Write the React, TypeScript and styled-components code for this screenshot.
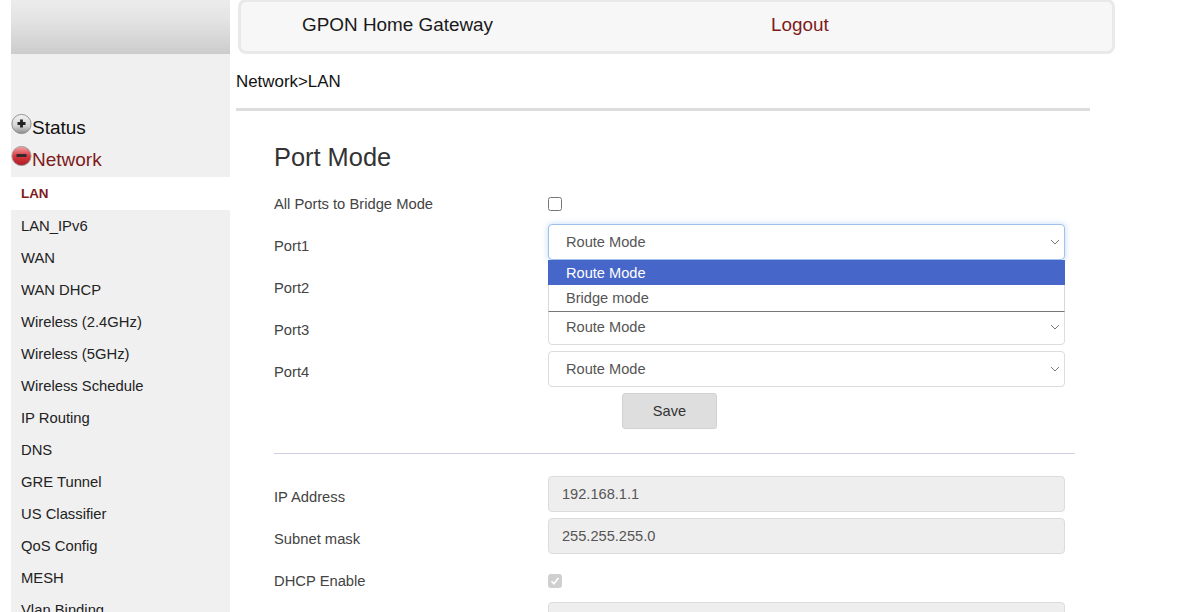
import React from "react";
import styled, { createGlobalStyle } from "styled-components";

const Global = createGlobalStyle`
  html, body { margin: 0; padding: 0; background: #fff; }
  body { font-family: "Liberation Sans", Arial, sans-serif; }
  * { box-sizing: border-box; }
`;

const Page = styled.div`
  width: 1200px;
  height: 612px;
  overflow: hidden;
  display: flex;
  padding-left: 11px;
`;

const Sidebar = styled.aside`
  width: 219px;
  flex: none;
  background: #f0f0f0;
`;

const Banner = styled.div`
  height: 54px;
  margin-bottom: 58px;
  background: linear-gradient(#ececec 0%, #e4e4e4 35%, #cccccc 100%);
`;

const Group = styled.div<{ $active?: boolean }>`
  height: 32px;
  display: flex;
  align-items: flex-start;
  font-size: 19px;
  color: ${(p) => (p.$active ? "#7e1b1b" : "#111")};
  svg { flex: none; margin: 1px 0 0 0; }
  span { margin-top: 5px; line-height: 22px; }
`;

const NavList = styled.nav`
  display: flex;
  flex-direction: column;
  margin-top: 1px;
`;

const NavItem = styled.div<{ $active?: boolean }>`
  height: ${(p) => (p.$active ? "33px" : "32px")};
  padding-left: 10px;
  display: flex;
  align-items: center;
  font-size: ${(p) => (p.$active ? "13.4px" : "14.8px")};
  font-weight: ${(p) => (p.$active ? 700 : 400)};
  color: ${(p) => (p.$active ? "#7e1b1b" : "#222")};
  background: ${(p) => (p.$active ? "#fff" : "transparent")};
`;

const Main = styled.main`
  flex: none;
  width: 880px;
  margin-left: 6px;
`;

const Header = styled.header`
  width: 877px;
  height: 55px;
  margin: -1px 0 0 2px;
  display: flex;
  align-items: center;
  background: #f7f7f7;
  border: 3px solid #e9e9e9;
  border-radius: 8px;
  padding: 0 0 3px 61px;
  font-size: 18.9px;
  color: #1a1a1a;
`;

const Title = styled.div`
  width: 469px;
  flex: none;
`;

const Logout = styled.div`
  color: #7e1b1b;
`;

const Crumb = styled.div`
  height: 54px;
  padding-top: 2px;
  display: flex;
  align-items: center;
  font-size: 16.9px;
  color: #111;
`;

const Rule = styled.div`
  width: 854px;
  height: 3px;
  background: #dddddd;
`;

const Content = styled.div`
  padding: 32px 0 0 38px;
`;

const Heading = styled.h2`
  margin: 0 0 20px;
  height: 29px;
  font-size: 25.4px;
  line-height: 29px;
  font-weight: 400;
  color: #333;
`;

const Row = styled.div<{ $h?: number }>`
  height: ${(p) => p.$h ?? 42}px;
  display: flex;
  align-items: flex-start;
`;

const Label = styled.label<{ $top?: number }>`
  width: 274px;
  flex: none;
  font-size: 14.75px;
  line-height: 18px;
  padding-top: ${(p) => p.$top ?? 12}px;
  color: #444;
`;

const Box = styled.div<{ $checked?: boolean }>`
  width: 14px;
  height: 14px;
  margin-top: ${(p) => (p.$checked ? 14 : 5)}px;
  border-radius: 2.5px;
  display: flex;
  align-items: center;
  justify-content: center;
  border: 1px solid ${(p) => (p.$checked ? "#cfcfcf" : "#767676")};
  background: ${(p) => (p.$checked ? "#cfcfcf" : "#fff")};
`;

const SelectWrap = styled.div`
  position: relative;
  width: 516.5px;
`;

const Select = styled.div<{ $focus?: boolean }>`
  width: 516.5px;
  height: 36px;
  display: flex;
  align-items: center;
  justify-content: space-between;
  padding: 0 3px 0 17px;
  font-size: 14.6px;
  color: #555;
  background: #fff;
  border: 1px solid ${(p) => (p.$focus ? "#9fc1ea" : "#dcdcdc")};
  border-radius: 4px;
  box-shadow: ${(p) => (p.$focus ? "0 0 6px rgba(120,170,240,.45)" : "none")};
`;

const Menu = styled.div`
  position: absolute;
  left: 0;
  top: 36px;
  width: 517px;
  height: 52px;
  background: #fff;
  border-left: 1px solid #d8d8d8;
  border-right: 1px solid #d8d8d8;
  border-bottom: 1px solid #777;
  z-index: 2;
`;

const Option = styled.div<{ $selected?: boolean }>`
  height: 25px;
  margin: 0 -1px;
  padding-left: 18px;
  display: flex;
  align-items: center;
  font-size: 14.6px;
  color: ${(p) => (p.$selected ? "#fff" : "#555")};
  background: ${(p) => (p.$selected ? "#4766c9" : "transparent")};
`;

const Actions = styled.div`
  padding-left: 348px;
  height: 60px;
`;

const SaveButton = styled.button`
  width: 95px;
  height: 36px;
  border: 1px solid #d2d2d2;
  border-radius: 3px;
  background: #dedede;
  font-family: inherit;
  font-size: 14.6px;
  color: #333;
  padding: 0;
`;

const Divider = styled.div`
  width: 801px;
  height: 1px;
  margin-bottom: 22px;
  background: #cfcfe2;
`;

const Input = styled.div`
  width: 516.5px;
  height: 36px;
  display: flex;
  align-items: center;
  padding-left: 13px;
  font-size: 14.6px;
  color: #555;
  background: #eee;
  border: 1px solid #dcdcdc;
  border-radius: 4px;
`;

const Chevron = () => (
  <svg width="12" height="12" viewBox="0 0 12 12" fill="none">
    <path d="M2 4l4 4 4-4" stroke="#777" strokeWidth="1" />
  </svg>
);

const PlusIcon = () => (
  <svg width="21" height="22" viewBox="0 0 21 22">
    <defs>
      <linearGradient id="plusGrad" x1="0" y1="0" x2="0" y2="1">
        <stop offset="0" stopColor="#f4f4f4" />
        <stop offset="0.6" stopColor="#d4d4d4" />
        <stop offset="1" stopColor="#8a8a8a" />
      </linearGradient>
    </defs>
    <circle cx="10.5" cy="11" r="9.6" fill="url(#plusGrad)" stroke="#8a8a8a" strokeWidth="0.9" />
    <path d="M10.5 6.5v8M6.5 10.5h8" stroke="#222" strokeWidth="2.8" />
  </svg>
);

const MinusIcon = () => (
  <svg width="21" height="22" viewBox="0 0 21 22">
    <defs>
      <linearGradient id="minusGrad" x1="0" y1="0" x2="0" y2="1">
        <stop offset="0" stopColor="#f0a8a8" />
        <stop offset="0.5" stopColor="#d9383f" />
        <stop offset="1" stopColor="#a81c22" />
      </linearGradient>
    </defs>
    <circle cx="10.5" cy="11" r="9.6" fill="url(#minusGrad)" stroke="#9a9a9a" strokeWidth="0.9" />
    <path d="M5.5 10.5h10" stroke="#2a2a2a" strokeWidth="2.8" />
  </svg>
);

const navItems = [
  "LAN_IPv6",
  "WAN",
  "WAN DHCP",
  "Wireless (2.4GHz)",
  "Wireless (5GHz)",
  "Wireless Schedule",
  "IP Routing",
  "DNS",
  "GRE Tunnel",
  "US Classifier",
  "QoS Config",
  "MESH",
  "Vlan Binding",
];

export default function App() {
  return (
    <Page>
      <Global />
      <Sidebar>
        <Banner />
        <Group>
          <PlusIcon />
          <span>Status</span>
        </Group>
        <Group $active>
          <MinusIcon />
          <span>Network</span>
        </Group>
        <NavList>
          <NavItem $active>LAN</NavItem>
          {navItems.map((n) => (
            <NavItem key={n}>{n}</NavItem>
          ))}
        </NavList>
      </Sidebar>
      <Main>
        <Header>
          <Title>GPON Home Gateway</Title>
          <Logout>Logout</Logout>
        </Header>
        <Crumb>Network&gt;LAN</Crumb>
        <Rule />
        <Content>
          <Heading>Port Mode</Heading>
          <Row $h={32}>
            <Label $top={3}>All Ports to Bridge Mode</Label>
            <Box />
          </Row>
          <Row>
            <Label $top={13}>Port1</Label>
            <SelectWrap>
              <Select $focus>
                Route Mode
                <Chevron />
              </Select>
              <Menu>
                <Option $selected>Route Mode</Option>
                <Option>Bridge mode</Option>
              </Menu>
            </SelectWrap>
          </Row>
          <Row $h={43}>
            <Label $top={13}>Port2</Label>
            <Select />
          </Row>
          <Row>
            <Label>Port3</Label>
            <Select>
              Route Mode
              <Chevron />
            </Select>
          </Row>
          <Row>
            <Label>Port4</Label>
            <Select>
              Route Mode
              <Chevron />
            </Select>
          </Row>
          <Actions>
            <SaveButton>Save</SaveButton>
          </Actions>
          <Divider />
          <Row>
            <Label>IP Address</Label>
            <Input>192.168.1.1</Input>
          </Row>
          <Row>
            <Label>Subnet mask</Label>
            <Input>255.255.255.0</Input>
          </Row>
          <Row>
            <Label>DHCP Enable</Label>
            <Box $checked>
              <svg width="10" height="10" viewBox="0 0 10 10" fill="none">
                <path d="M1.5 5.2l2.3 2.5L8.5 2" stroke="#fff" strokeWidth="1.6" />
              </svg>
            </Box>
          </Row>
          <Row>
            <Label />
            <Input />
          </Row>
        </Content>
      </Main>
    </Page>
  );
}
